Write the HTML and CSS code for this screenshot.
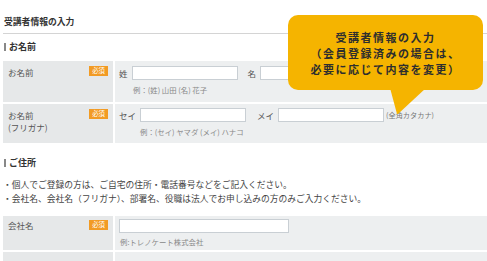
FILE: index.html
```html
<!DOCTYPE html>
<html lang="ja">
<head>
<meta charset="utf-8">
<link rel="stylesheet" href="styles.css">
</head>
<body>
<div class="page">
  <h1 class="title">受講者情報の入力</h1>

  <h2 class="section">お名前</h2>
  <div class="form">
    <div class="label row1"><span>お名前</span><span class="req">必須</span></div>
    <div class="value row1">
      <div class="line">
        <span class="pre">姓</span><span class="input w106"></span>
        <span class="pre gap">名</span><span class="input w106"></span>
      </div>
      <div class="example ex1">例：(姓) 山田 (名) 花子</div>
    </div>

    <div class="label row2"><span>お名前<br>(フリガナ)</span><span class="req">必須</span></div>
    <div class="value row2">
      <div class="line">
        <span class="pre">セイ</span><span class="input w106"></span>
        <span class="pre gap2">メイ</span><span class="input w106"></span>
        <span class="note">(全角カタカナ)</span>
      </div>
      <div class="example ex2">例：(セイ) ヤマダ (メイ) ハナコ</div>
    </div>
  </div>

  <h2 class="section sec2">ご住所</h2>
  <ul class="bullets">
    <li>・個人でご登録の方は、ご自宅の住所・電話番号などをご記入ください。</li>
    <li>・会社名、会社名（フリガナ）、部署名、役職は法人でお申し込みの方のみご入力ください。</li>
  </ul>
  <div class="form">
    <div class="label row3"><span>会社名</span><span class="req">必須</span></div>
    <div class="value row3">
      <div class="line"><span class="input w170"></span></div>
      <div class="example ex3">例:トレノケート株式会社</div>
    </div>
    <div class="label row4"></div>
    <div class="value row4"></div>
  </div>
</div>

<div class="bubble">
  <div class="bubble-body">
    <p>受講者情報の入力</p>
    <p>（会員登録済みの場合は、</p>
    <p>必要に応じて内容を変更）</p>
  </div>
  <svg class="tail" width="40" height="28" viewBox="0 0 40 28">
    <polygon points="0,0 36,0 8,26 7,26" fill="#f5b400"/>
  </svg>
</div>
</body>
</html>
```
FILE: styles.css
```css
html, body {
  margin: 0;
  padding: 0;
  background: #fff;
}
body {
  width: 487px;
  height: 261px;
  overflow: hidden;
  position: relative;
  font-family: "Noto Sans CJK JP", "Noto Sans", sans-serif;
  color: #444;
}
.page {
  padding-left: 3px;
}
.title {
  margin: 16px 0 0 0;
  font-size: 8.8px;
  line-height: 12px;
  font-weight: bold;
  color: #333;
  padding: 0 0 5px 1px;
  border-bottom: 1px solid #d4d4d4;
}
.section {
  margin: 7px 0 8px 1px;
  font-size: 9px;
  line-height: 12px;
  font-weight: bold;
  color: #333;
  display: flex;
  align-items: center;
  gap: 3px;
}
.section::before {
  content: "";
  width: 2px;
  height: 8px;
  background: #888;
}
.sec2 {
  margin-top: 14px;
  margin-bottom: 9px;
}
.form {
  display: grid;
  grid-template-columns: 110px 1fr;
  gap: 2px;
}
.label {
  background: #e6e8e9;
  display: flex;
  justify-content: space-between;
  align-items: flex-start;
  padding: 5px 5px 0 5px;
  font-size: 8.5px;
  line-height: 12px;
  color: #555;
}
.value {
  background: #edeff0;
  padding: 5px 4px 0 4px;
  font-size: 8.5px;
  color: #555;
}
.row1 { height: 36px; }
.row2 { height: 34px; padding-top: 4px; }
.row2.label { padding-top: 5px; height: 34px; }
.row2.value { height: 35px; }
.row3 { height: 31px; padding-top: 3px; }
.row4 { height: 9px; padding: 0; }
.req {
  background: #f29b24;
  color: #fff;
  font-size: 6.3px;
  line-height: 10px;
  width: 19px;
  text-align: center;
}
.row3 .req { margin-top: 1px; }
.line {
  display: flex;
  align-items: center;
  height: 14px;
}
.pre {
  margin-right: 4px;
  line-height: 14px;
}
.gap { margin-left: 10px; }
.gap2 { margin-left: 11px; }
.input {
  display: block;
  height: 14px;
  box-sizing: border-box;
  background: #fff;
  border: 1px solid #c9cfd4;
}
.w106 { width: 106px; }
.w170 { width: 170px; }
.note {
  font-size: 7.2px;
  color: #777;
  margin-left: 2px;
}
.example {
  font-size: 7.4px;
  line-height: 11px;
  color: #888;
  margin-top: 4px;
}
.ex1 { padding-left: 14px; }
.ex2 { padding-left: 21px; }
.ex3 { padding-left: 1px; margin-top: 3px; }
.bullets {
  list-style: none;
  margin: 0 0 10px 0;
  padding: 0;
  font-size: 8.75px;
  line-height: 14px;
  color: #444;
}
.bubble {
  position: absolute;
  left: 288px;
  top: 15px;
  width: 195px;
}
.bubble-body {
  background: #f5b400;
  border-radius: 10px;
  height: 75px;
  box-sizing: border-box;
  padding-top: 14px;
  text-align: center;
  color: #2e2e2e;
  font-size: 11px;
  font-weight: bold;
  letter-spacing: 1.5px;
  line-height: 16px;
}
.bubble-body p {
  margin: 0;
}
.tail {
  position: absolute;
  left: 102px;
  top: 73px;
}
```
